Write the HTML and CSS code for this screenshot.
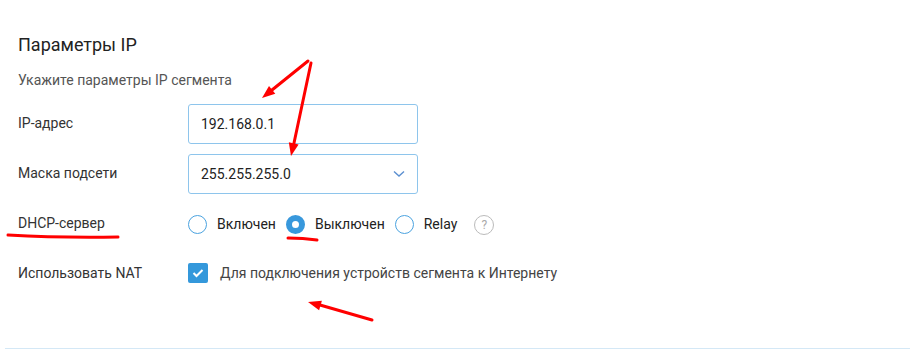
FILE: index.html
```html
<!DOCTYPE html>
<html lang="ru">
<head>
    <meta charset="UTF-8">
    <title>Параметры IP</title>
    <link rel="stylesheet" href="styles.css">
</head>
<body>

<div class="section">
    <h2 class="section-title">Параметры IP</h2>
    <p class="section-hint">Укажите параметры IP сегмента</p>

    <div class="form-row">
        <label class="form-label">IP-адрес</label>
        <div class="field">
            <input class="text-input" type="text" value="192.168.0.1">
        </div>
    </div>

    <div class="form-row">
        <label class="form-label">Маска подсети</label>
        <div class="field select-field">
            <span class="select-value">255.255.255.0</span>
            <svg class="chevron" width="12" height="8" viewBox="0 0 12 8">
                <path d="M1 1.5 L6 6 L11 1.5" fill="none" stroke="#5b8fd0" stroke-width="1.4"/>
            </svg>
        </div>
    </div>

    <div class="form-row">
        <label class="form-label">DHCP-сервер</label>
        <div class="radio-group">
            <span class="radio"></span><span class="radio-text">Включен</span>
            <span class="radio checked"></span><span class="radio-text">Выключен</span>
            <span class="radio"></span><span class="radio-text">Relay</span>
            <span class="help-icon">?</span>
        </div>
    </div>

    <div class="form-row">
        <label class="form-label">Использовать NAT</label>
        <div class="check-line">
            <span class="checkbox">
                <svg width="12" height="10" viewBox="0 0 12 10">
                    <path d="M1.5 5 L4.5 8 L10.5 2" fill="none" stroke="#fff" stroke-width="2"/>
                </svg>
            </span>
            <span class="check-text">Для подключения устройств сегмента к Интернету</span>
        </div>
    </div>
</div>

<div class="divider"></div>

<!-- red annotation marks drawn over the form -->
<svg class="marks" width="910" height="352" viewBox="0 0 910 352">
    <g stroke="#f00" stroke-width="3" stroke-linecap="round" fill="none">
        <line x1="308" y1="61" x2="272" y2="90"/>
        <line x1="311" y1="63" x2="294" y2="143"/>
        <line x1="372" y1="320" x2="320" y2="305"/>
        <path d="M8 235 Q60 238 118 237"/>
        <path d="M288 238 Q303 238 317 240"/>
    </g>
    <g fill="#f00">
        <polygon points="262,98 275.3,93.7 269,85.9"/>
        <polygon points="291,156 298.6,144.4 288.8,142.2"/>
        <polygon points="308,302 321.9,300.7 319.1,310.3"/>
    </g>
</svg>

</body>
</html>
```

FILE: styles.css
```css
body {
    font-family: Roboto, "Liberation Sans", Arial, sans-serif;
    margin: 0;
    background-color: #fff;
    color: #333;
}

.section {
    padding: 33px 0 0 18px;
    height: 315px;
    box-sizing: border-box;
}

.section-title {
    margin: 0;
    font-size: 18px;
    line-height: 24px;
    font-weight: 400;
    color: #222;
}

.section-hint {
    margin: 13px 0 14px;
    font-size: 14px;
    line-height: 20px;
    color: #555;
}

.form-row {
    display: flex;
    align-items: center;
    height: 40px;
    margin-bottom: 10px;
}

.form-label {
    width: 170px;
    font-size: 14px;
    color: #333;
    margin-top: -2px;
}

.field {
    width: 230px;
    height: 40px;
    box-sizing: border-box;
    border: 1px solid #8ec5ec;
    border-radius: 3px;
}

.text-input {
    width: 100%;
    height: 100%;
    border: none;
    padding: 0 12px;
    box-sizing: border-box;
    font-family: inherit;
    font-size: 14px;
    color: #222;
    background: transparent;
    outline: none;
}

.select-field {
    display: flex;
    align-items: center;
    justify-content: space-between;
    padding: 0 12px;
}

.select-value {
    font-size: 14px;
    color: #222;
}

.radio-group {
    display: flex;
    align-items: center;
}

.radio {
    width: 19px;
    height: 19px;
    box-sizing: border-box;
    border: 1.5px solid #4ba3e0;
    border-radius: 50%;
    margin-right: 10px;
}

.radio.checked {
    border: 6px solid #3898dc;
    background-color: #fff;
}

.radio-text {
    font-size: 14px;
    color: #222;
    margin-right: 10px;
}

.help-icon {
    width: 20px;
    height: 20px;
    box-sizing: border-box;
    border: 1px solid #bbb;
    border-radius: 50%;
    margin-left: 7px;
    margin-top: 2px;
    font-size: 12px;
    line-height: 18px;
    text-align: center;
    color: #aaa;
}

.check-line {
    display: flex;
    align-items: center;
    margin-top: -2px;
}

.checkbox {
    width: 20px;
    height: 20px;
    border-radius: 2px;
    background-color: #3498db;
    display: flex;
    align-items: center;
    justify-content: center;
    margin-right: 12px;
}

.check-text {
    font-size: 14px;
    color: #444;
}

.divider {
    margin: 33px 0 0 5px;
    border-top: 1px solid #d4e8f6;
}

.marks {
    position: absolute;
    top: 0;
    left: 0;
    pointer-events: none;
}
```
